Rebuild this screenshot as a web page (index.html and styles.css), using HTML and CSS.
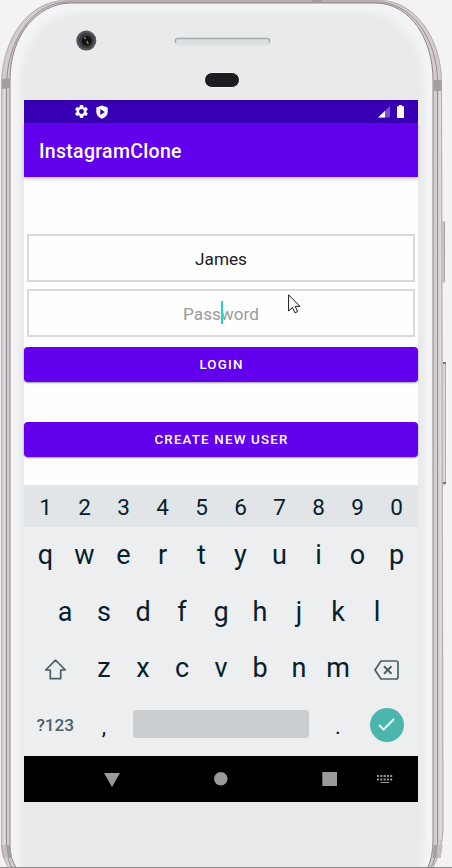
FILE: index.html
```html
<!DOCTYPE html>
<html lang="en">
<head>
<meta charset="utf-8">
<title>InstagramClone</title>
<link rel="stylesheet" href="styles.css">
</head>
<body>
<div class="device">
  <svg class="shell" viewBox="0 0 452 868" aria-hidden="true">
    <defs>
      <filter id="soft" x="-5%" y="-5%" width="110%" height="110%"><feGaussianBlur stdDeviation="3"/></filter>
      <clipPath id="face"><path d="M10 848V80C10 35 37 4 70 3H375C411 3 433 40 433 80V840Q433 858 427 869H17Q10 858 10 848Z"/></clipPath>
    </defs>
    <rect x="440" y="221" width="5" height="62" rx="1.500" fill="#c9c8c9"/>
    <path d="M444.500 222V281" stroke="#a5a3a5"/>
    <rect x="440" y="362" width="5.500" height="124" rx="1.500" fill="#d8d7d8"/>
    <path d="M445.500 364V484" stroke="#b0aeb0"/>
    <path d="M443 363h3M443 483h3" stroke="#777" stroke-width="2"/>
    <path d="M1 845V82C2 42 25 .500 66 0H380C415 0 442 38 442 82L443.500 830Q443 850 432 870H11Q1 858 1 845Z" fill="#d3cdd0"/>
    <path d="M1.700 845V82C3 42 26 .800 66 .500H380C414 .500 441.300 38 441.500 82L443 830Q442 850 432 870M10 870Q1.700 858 1.700 845" fill="none" stroke="#b8b0b3"/>
    <path d="M6.500 848V85C7 42 32 2 68 2H377C412 2 437.500 40 437.500 82V842Q437 856 430 870M13 870Q6.500 858 6.500 848" fill="none" stroke="#958d8f"/>
    <path d="M4 845V88M440 84L440.500 840" stroke="#e2dcdf" stroke-width="1.500"/>
    <path d="M10 848V80C10 35 37 4 70 3H375C411 3 433 40 433 80V840Q433 858 427 869H17Q10 858 10 848Z" fill="#f3f4f5" stroke="#8b8587"/>
    <g clip-path="url(#face)"><path d="M19 860V92C19 43 44 13 82 12H364C402 13 425 46 425 92V840Q424 855 416 880H28Q19 865 19 860Z" fill="#e8eaec" filter="url(#soft)"/></g>
    <path d="M2 79L10 78V88L2 89ZM434 80h7.500v11H434ZM312 0h10v2h-10ZM1.500 845h8.500l2 13H3.500ZM434 845h8.500l-2 13h-8Z" fill="#a39e9f"/>
    <path d="M2 845h4l2 13H4ZM437.500 845h5l-2 13h-4Z" fill="#c5bfc1"/>
    <circle cx="86.300" cy="40.600" r="10" fill="#515356"/>
    <circle cx="86.300" cy="40.600" r="7.500" fill="#393b3e"/>
    <circle cx="86.800" cy="41" r="5" fill="#101214"/>
    <circle cx="85" cy="38" r="1.200" fill="#59606a"/>
    <path d="M87 41l1 3" stroke="#7d7540" stroke-width="1.800"/>
    <rect x="175" y="37.500" width="95" height="8" rx="3" fill="#dcdfe0"/>
    <path d="M175.500 43V40.500Q175.500 38.500 178 38.500H267Q269.500 38.500 269.500 40.500V43" fill="none" stroke="#a4adb2" stroke-width="1.400"/>
    <rect x="204.500" y="72.500" width="35" height="15" rx="7.500" fill="#1b1d20" stroke="#f4f5f5"/>
    <path d="M0 867.500H452" stroke="#8d8d8d"/>
  </svg>

  <main class="screen">
    <header class="status">
      <div class="status-left">
        <svg width="13" height="13" viewBox="2 2 20 20"><path fill="#fff" fill-rule="evenodd" d="M19.430 12.980a7.800 7.800 0 0 0 0-1.960l2.110-1.650a.5.5 0 0 0 .12-.64l-2-3.460a.5.5 0 0 0-.61-.22l-2.490 1a7.300 7.300 0 0 0-1.690-.98l-.38-2.650A.49.49 0 0 0 14 2h-4a.49.49 0 0 0-.49.42l-.38 2.650c-.61.25-1.170.58-1.690.98l-2.490-1a.49.49 0 0 0-.61.22l-2 3.460a.49.49 0 0 0 .12.64l2.110 1.650a7.900 7.900 0 0 0 0 1.960l-2.110 1.650a.5.5 0 0 0-.12.64l2 3.460c.12.220.390.300.610.220l2.490-1c.52.400 1.080.730 1.690.980l.38 2.650c.03.240.240.420.490.420h4c.25 0 .46-.18.490-.42l.38-2.650c.61-.25 1.170-.59 1.690-.98l2.490 1c.23.090.490 0 .61-.22l2-3.460a.5.5 0 0 0-.12-.64zM12 15.800a3.800 3.800 0 1 1 0-7.600 3.800 3.800 0 0 1 0 7.600z"/></svg>
        <svg width="12" height="14" viewBox="0 0 12 14"><path fill="#fff" fill-rule="evenodd" d="M6 .5L11.700 2.600V6.500C11.700 10 9.500 12.600 6 13.700C2.500 12.600 .3 10 .3 6.500V2.600ZM4.300 4V10L8.900 7Z"/></svg>
      </div>
      <div class="status-right">
        <svg width="12" height="12" viewBox="0 0 12 12"><path fill="#7a50cc" d="M12 0V11.500H.5Z"/><path fill="#fff" d="M7 4.800V11.500H0Z"/></svg>
        <svg width="7" height="13" viewBox="0 0 7 13"><path fill="#fff" d="M2 0H5V1.200H7V13H0V1.200H2Z"/></svg>
      </div>
    </header>
    <div class="appbar"><h1>InstagramClone</h1></div>
    <section class="form">
      <div class="field">James</div>
      <div class="field hint">Password<span class="caret"></span></div>
      <div class="button">LOGIN</div>
      <div class="button create">CREATE NEW USER</div>
      <svg class="pointer" width="13" height="20" viewBox="0 0 13 20"><path d="M.6.8V17L4.400 13.500L7 18.800L9.600 17.600L7.200 12.300H11.900Z" fill="#fff" stroke="#17171c"/></svg>
    </section>
    <section class="keyboard">
      <div class="keys digits"><span>1</span><span>2</span><span>3</span><span>4</span><span>5</span><span>6</span><span>7</span><span>8</span><span>9</span><span>0</span></div>
      <div class="keys"><span>q</span><span>w</span><span>e</span><span>r</span><span>t</span><span>y</span><span>u</span><span>i</span><span>o</span><span>p</span></div>
      <div class="keys"><span>a</span><span>s</span><span>d</span><span>f</span><span>g</span><span>h</span><span>j</span><span>k</span><span>l</span></div>
      <div class="keys">
        <span class="wide"><svg class="shift" width="23" height="21" viewBox="0 0 23 21"><path d="M11.500 1.200L21.300 11H16.700V19.700H6.300V11H1.700Z" fill="none" stroke="#4b5f68" stroke-width="1.700" stroke-linejoin="round"/></svg></span>
        <span>z</span><span>x</span><span>c</span><span>v</span><span>b</span><span>n</span><span>m</span>
        <span class="wide"><svg class="delete" width="25" height="20" viewBox="0 0 25 20"><path d="M7 1H22Q24 1 24 3V17Q24 19 22 19H7L1 10Z" fill="none" stroke="#4b5f68" stroke-width="1.700" stroke-linejoin="round"/><path d="M10 6.300L17.500 13.700M17.500 6.300L10 13.700" stroke="#4b5f68" stroke-width="1.900"/></svg></span>
      </div>
      <div class="keys bottom">
        <span class="wide symbols">?123</span><span class="mark">,</span><span class="space"><i></i></span><span class="mark">.</span>
        <span class="wide"><b class="done"><svg width="17" height="13" viewBox="0 0 17 13"><path d="M1 7L5.700 11.500L16 1" fill="none" stroke="#fff" stroke-width="1.900"/></svg></b></span>
      </div>
    </section>
    <nav class="nav">
      <svg width="394" height="46" viewBox="0 0 394 46" fill="#9a9a9a">
        <path d="M80 17H96L88 31Z"/>
        <circle cx="196.800" cy="22.800" r="6.800"/>
        <rect x="298.300" y="16" width="14.700" height="14"/>
        <path d="M353 20H368.500M353 23.500H368.500" stroke="#9a9a9a" stroke-width="2" stroke-dasharray="2 1.300"/>
        <path d="M356.500 26.500H365" stroke="#9a9a9a"/>
      </svg>
    </nav>
  </main>
</div>
</body>
</html>
```

FILE: styles.css
```css
* { box-sizing: border-box; }
body { margin: 0; background: #f3f3f3; font-family: Roboto, "Liberation Sans", sans-serif; }
.device { position: relative; width: 452px; height: 868px; padding: 100px 34px 66px 24px; overflow: hidden; }
.shell { position: absolute; inset: 0; width: 452px; height: 868px; }
svg { display: block; }
.screen { position: relative; display: flex; flex-direction: column; width: 394px; height: 702px; background: #fefefe; }
.status { display: flex; justify-content: space-between; height: 23px; padding: 0 14px 0 51px; background: #3700b3; }
.status-left, .status-right { display: flex; align-items: center; gap: 8px; }
.status-right { gap: 7px; }
.appbar { position: relative; display: flex; align-items: center; height: 54px; padding: 3px 0 0 15px; background: #6200ee; box-shadow: 0 2px 3px rgba(0, 0, 0, .22); }
h1 { margin: 0; color: #fff; font-size: 19.500px; font-weight: 500; letter-spacing: .3px; line-height: 24px; }
.form { position: relative; display: flex; flex-direction: column; height: 308px; padding-top: 57px; }
.field { position: relative; display: flex; align-items: center; justify-content: center; height: 48px; margin: 0 3px 7px; padding-top: 2px; border: 2px solid #dadada; color: #202020; font-size: 17.200px; }
.hint { margin-bottom: 10px; padding-top: 1px; color: #9b9b9b; }
.caret { position: absolute; left: 192px; top: 10px; width: 2px; height: 23px; background: #1ed6c1; }
.button { display: flex; align-items: center; justify-content: center; height: 35px; padding-left: 1px; border-radius: 4px; background: #6200ee; box-shadow: 0 1px 2px rgba(0, 0, 0, .4); color: #fff; font-size: 13.300px; font-weight: 500; letter-spacing: 1.200px; }
.create { margin-top: 40px; }
.pointer { position: absolute; left: 264px; top: 117px; }
.keyboard { height: 271px; background: #eceeef; color: #06202c; }
.keys { display: flex; justify-content: center; height: 56.500px; padding: 0 1px; font-size: 27px; line-height: 56px; }
.keys span { display: flex; align-items: center; justify-content: center; width: 39px; }
.keys .wide { width: 58.500px; }
.shift { margin-top: 2px; }
.delete { margin-top: 3px; }
.digits { height: 42px; padding-top: 2px; background: #e1e5e8; font-size: 22.500px; line-height: 42px; }
.keys .symbols { color: #4b5f68; font-size: 17.200px; font-weight: 500; }
.keys .mark { font-size: 22px; padding-top: 4px; }
.keys .space { width: 195px; }
.space i { width: 176px; height: 28px; margin-top: -1px; border-radius: 3px; background: #c9cdd0; }
.done { display: flex; align-items: center; justify-content: center; width: 34px; height: 34px; border-radius: 50%; background: #4db6ac; }
.nav { height: 46px; background: #000; }
```
